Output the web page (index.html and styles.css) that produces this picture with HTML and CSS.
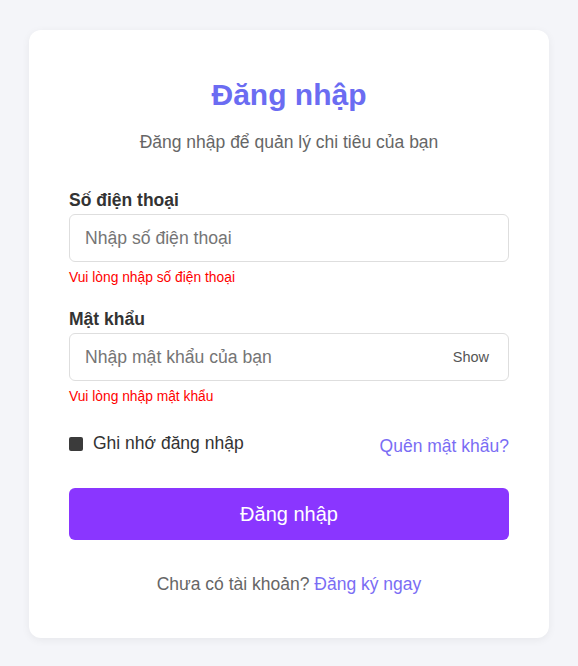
FILE: index.html
```html
<!DOCTYPE html>
<html lang="vi">
<head>
<meta charset="utf-8">
<title>Đăng nhập</title>
<link rel="stylesheet" href="styles.css">
</head>
<body>
<main class="card">
  <h1 class="title">Đăng nhập</h1>
  <p class="subtitle">Đăng nhập để quản lý chi tiêu của bạn</p>
  <form class="form">
    <div class="field">
      <label class="label" for="phone">Số điện thoại</label>
      <div class="input-wrap">
        <input class="input" id="phone" type="text" placeholder="Nhập số điện thoại">
      </div>
      <div class="error">Vui lòng nhập số điện thoại</div>
    </div>
    <div class="field">
      <label class="label" for="pass">Mật khẩu</label>
      <div class="input-wrap">
        <input class="input" id="pass" type="password" placeholder="Nhập mật khẩu của bạn">
        <span class="show">Show</span>
      </div>
      <div class="error">Vui lòng nhập mật khẩu</div>
    </div>
    <div class="options">
      <label class="remember"><span class="box"></span>Ghi nhớ đăng nhập</label>
      <a class="link forgot" href="#">Quên mật khẩu?</a>
    </div>
    <button class="btn" type="button">Đăng nhập</button>
  </form>
  <p class="footer">Chưa có tài khoản? <a class="link" href="#">Đăng ký ngay</a></p>
</main>
</body>
</html>
```
FILE: styles.css
```css
* { box-sizing: border-box; }
html, body { margin: 0; padding: 0; }
body {
  background: #f4f5f9;
  font-family: "Liberation Sans", Arial, sans-serif;
  color: #333;
  padding: 30px 29px 28px;
}
.card {
  width: 520px;
  height: 608px;
  background: #fff;
  border-radius: 12px;
  box-shadow: 0 2px 8px rgba(0,0,0,0.06);
  padding: 46px 40px 0;
}
.title {
  margin: 0;
  text-align: center;
  font-size: 30px;
  font-weight: bold;
  color: #6b6cf2;
  line-height: 37px;
}
.subtitle {
  margin: 19px 0 0;
  text-align: center;
  font-size: 17.5px;
  line-height: 20px;
  color: #666;
}
.form { margin-top: 38px; }
.field { margin-bottom: 23px; }
.label {
  display: block;
  font-size: 17.5px;
  font-weight: bold;
  line-height: 20px;
  color: #333;
  margin-bottom: 4px;
}
.input-wrap { position: relative; }
.input {
  display: block;
  width: 100%;
  height: 48px;
  border: 1px solid #dedede;
  border-radius: 6px;
  padding: 0 70px 0 15px;
  font-family: inherit;
  font-size: 17.6px;
  color: #333;
  outline: none;
}
.input::placeholder { color: #757575; }
.show {
  position: absolute;
  right: 20px;
  top: 50%;
  transform: translateY(-50%);
  font-size: 14.5px;
  color: #555;
}
.error {
  margin-top: 8px;
  font-size: 13.8px;
  line-height: 16px;
  color: #f00;
}
.options {
  display: flex;
  justify-content: space-between;
  align-items: center;
  margin-top: 25px;
}
.remember {
  display: flex;
  align-items: center;
  font-size: 17.5px;
  color: #333;
}
.box {
  width: 14px;
  height: 14px;
  background: #3b3b3b;
  border-radius: 2px;
  margin-right: 10px;
}
.link { color: #7a6df4; text-decoration: none; }
.forgot { font-size: 17.5px; margin-top: 6px; }
.btn {
  display: block;
  width: 100%;
  height: 52px;
  margin-top: 31px;
  border: none;
  border-radius: 6px;
  background: #8a36ff;
  color: #fff;
  font-family: inherit;
  font-size: 20px;
}
.footer {
  margin: 34px 0 0;
  text-align: center;
  font-size: 17.5px;
  line-height: 20px;
  color: #666;
}
```
